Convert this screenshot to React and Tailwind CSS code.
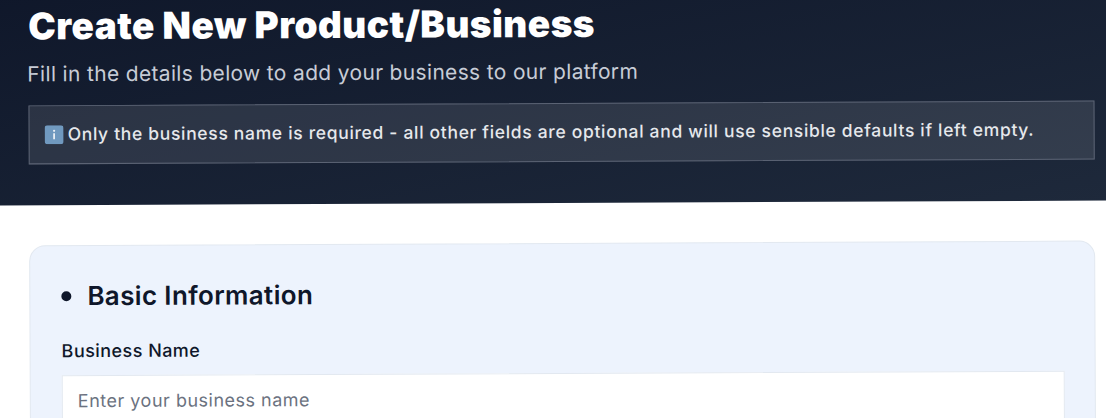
export default function App() {
  return (
    <div className="h-[418px] w-[1106px] overflow-hidden bg-white font-['Inter','Liberation_Sans',sans-serif]">
      <div className="-rotate-[0.26deg]">
        <header className="-mx-2 -mt-4 bg-gradient-to-br from-[#0f172a] to-[#1e293b] pt-4 pr-[19px] pb-[41px] pl-[36px]">
          <h1 className="pl-px text-[37px] leading-[48px] font-black tracking-[0.4px] text-white">Create New Product/Business</h1>
          <p className="mt-2 text-[21px] leading-8 tracking-[0.33px] text-[#c7ccd6]">Fill in the details below to add your business to our platform</p>
          <div className="mt-[15px] ml-px flex h-[59px] items-center gap-1 border border-[#5b6374] bg-white/10 pr-4 pl-[15px] text-[17.5px] font-medium tracking-[0.67px] text-[#e6e8ec]">
            <svg width="19" height="19" viewBox="0 0 19 19" className="shrink-0">
              <rect width="19" height="19" rx="3" fill="#7099bf" />
              <rect x="8.6" y="8" width="1.8" height="6" fill="#e8eef4" />
              <circle cx="9.5" cy="5.6" r="1.1" fill="#e8eef4" />
            </svg>
            <span>Only the business name is required - all other fields are optional and will use sensible defaults if left empty.</span>
          </div>
        </header>
        <main className="pt-10 pr-[11px] pl-[29px]">
          <section className="rounded-2xl border border-[#e2e8f0] bg-[#edf3fd] py-8 pr-[30px] pl-[31px]">
            <div className="flex items-center gap-4">
              <span className="h-[10px] w-[10px] rounded-full bg-[#0f172a]" />
              <h2 className="text-[26px] leading-9 font-semibold tracking-[0.35px] text-[#0f172a]">Basic Information</h2>
            </div>
            <label className="mt-[25px] block text-lg leading-6 font-medium tracking-[0.45px] text-[#0f172a]">Business Name</label>
            <input
              placeholder="Enter your business name"
              className="mt-3 h-[50px] w-full border border-[#e2e8f0] bg-white px-[15px] text-lg tracking-[0.5px] text-[#0f172a] placeholder:text-[#6b7280]"
            />
          </section>
        </main>
      </div>
    </div>
  );
}
